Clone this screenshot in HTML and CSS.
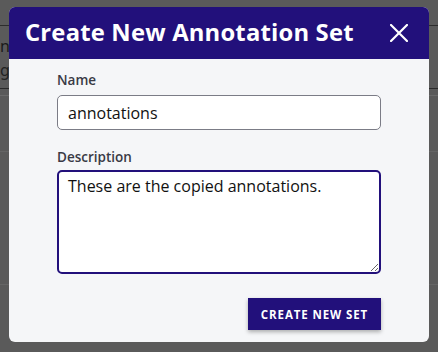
FILE: index.html
```html
<!DOCTYPE html>
<html>
<head>
<meta charset="utf-8">
<link rel="stylesheet" href="styles.css">
</head>
<body>
<div class="backdrop">
  <div class="under">
    <div class="under-row r1"><span class="ut">n</span></div>
    <div class="under-row r2"><span class="ut">g</span></div>
    <div class="under-row r3"></div>
    <div class="under-row r4"></div>
    <div class="under-row r5"></div>
  </div>
  <div class="dialog">
    <div class="dialog-header">
      <h1 class="dialog-title">Create New Annotation Set</h1>
      <button class="close-btn" aria-label="Close">
        <svg width="18" height="18" viewBox="0 0 18 18"><path d="M1 1 L17 17 M17 1 L1 17" stroke="#fff" stroke-width="2.2" stroke-linecap="square" fill="none"/></svg>
      </button>
    </div>
    <div class="dialog-body">
      <label class="field-label">Name</label>
      <input class="text-input" type="text" value="annotations">
      <label class="field-label desc-label">Description</label>
      <textarea class="text-area">These are the copied annotations.</textarea>
      <div class="actions">
        <button class="primary-btn">CREATE NEW SET</button>
      </div>
    </div>
  </div>
</div>
</body>
</html>
```
FILE: styles.css
```css
html, body {
  margin: 0;
  padding: 0;
  width: 438px;
  height: 352px;
  overflow: hidden;
}
body {
  font-family: "Noto Sans", "Open Sans", sans-serif;
  background: #5b5b5b;
}
.backdrop {
  position: relative;
  width: 438px;
  height: 352px;
  background: #5a5a5a;
  padding-top: 7px;
  box-sizing: border-box;
}
.under {
  position: absolute;
  left: 0;
  top: 0;
  width: 438px;
  height: 352px;
}
.under-row {
  position: absolute;
  left: 0;
  width: 438px;
}
.r1 {
  top: 25px;
  height: 38px;
  border-top: 1px solid #2c2c2c;
}
.r2 {
  top: 60px;
  height: 28px;
}
.r3 {
  top: 88px;
  border-top: 1px solid #2a2a2a;
  border-bottom: 1px solid #6a6a6a;
  height: 6px;
}
.r4 {
  top: 151px;
  border-top: 1px solid #656565;
}
.r5 {
  top: 284px;
  border-top: 1px solid #656565;
}
.ut {
  position: absolute;
  left: 0;
  font-family: "Noto Sans", sans-serif;
  font-size: 16px;
  line-height: 20px;
  color: #1a1a1a;
}
.r1 .ut { top: 10px; }
.r2 .ut { top: 0px; color: #222; }

.dialog {
  position: relative;
  margin-left: 9px;
  width: 420px;
  height: 335px;
  background: #f5f6f8;
  border-radius: 6px;
  overflow: hidden;
  display: flex;
  flex-direction: column;
}
.dialog-header {
  height: 52px;
  background: #22107b;
  display: flex;
  align-items: center;
  justify-content: space-between;
  padding: 0 21px 0 16px;
  box-sizing: border-box;
  flex-shrink: 0;
}
.dialog-title {
  margin: 0;
  color: #fff;
  font-family: "Open Sans", "Noto Sans", sans-serif;
  font-weight: 700;
  font-size: 23.8px;
  letter-spacing: 0.2px;
  line-height: 1;
  padding-bottom: 1px;
}
.close-btn {
  background: none;
  border: 0;
  padding: 0;
  width: 18px;
  height: 18px;
  display: flex;
  align-items: center;
  justify-content: center;
  margin-bottom: 1px;
}
.dialog-body {
  padding: 12px 48px 0 48px;
  display: flex;
  flex-direction: column;
}
.field-label {
  font-family: "Open Sans", "Noto Sans", sans-serif;
  font-size: 13.5px;
  font-weight: 600;
  color: #393a45;
  line-height: 19px;
  margin-bottom: 5px;
}
.desc-label {
  margin-top: 18px;
  margin-bottom: 3px;
}
.text-input {
  box-sizing: border-box;
  width: 324px;
  height: 35px;
  border: 1px solid #7b7c86;
  border-radius: 5px;
  background: #fff;
  font-family: "Open Sans", "Noto Sans", sans-serif;
  font-size: 16px;
  color: #111;
  padding: 0 10px;
  outline: none;
}
.text-area {
  box-sizing: border-box;
  width: 324px;
  height: 104px;
  border: 2px solid #22107b;
  border-radius: 5px;
  background: #fff;
  font-family: "Open Sans", "Noto Sans", sans-serif;
  font-size: 16px;
  line-height: 22px;
  color: #111;
  padding: 3px 9px;
  outline: none;
  resize: vertical;
  margin: 0;
}
.actions {
  display: flex;
  justify-content: flex-end;
  margin-top: 24px;
}
.primary-btn {
  background: #22107b;
  color: #fff;
  border: 0;
  height: 32px;
  width: 133px;
  font-family: "Open Sans", "Noto Sans", sans-serif;
  font-weight: 700;
  font-size: 11.5px;
  letter-spacing: 0.9px;
  box-shadow: 0 2px 4px rgba(0,0,0,0.3);
  padding: 0;
}
```
